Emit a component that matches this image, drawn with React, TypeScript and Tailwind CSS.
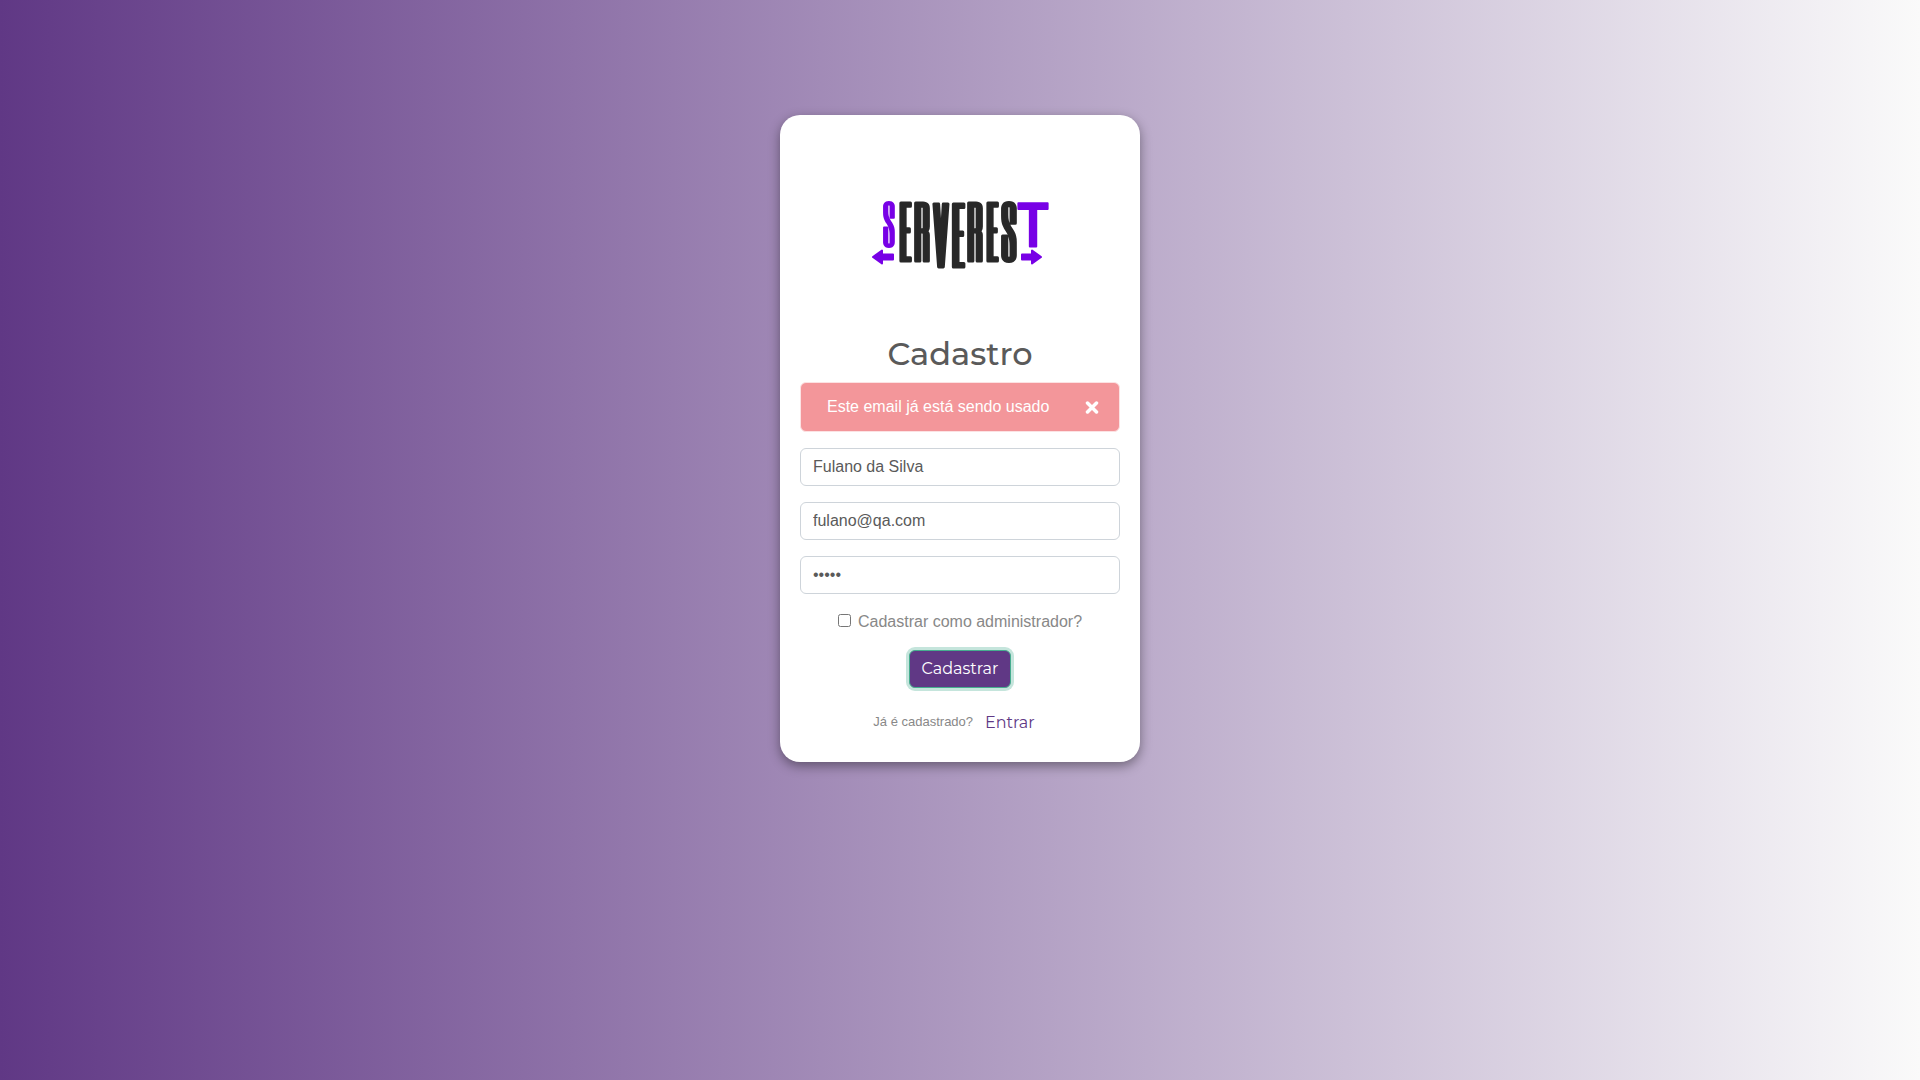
import { useState } from "react";

const heading = "font-['Montserrat','Inter',sans-serif]";
const field =
  "h-[38px] w-full rounded-md border border-[#ced4da] bg-white px-3 text-base leading-6 text-[#5a5a5a] outline-none";

const purple = "#7800e6";
const ink = "#282828";

const letters = [
  { char: "S", x: 29, y: 57, size: 52, color: purple, stroke: 2 },
  { char: "E", x: 45, y: 71, size: 68, color: ink, stroke: 3 },
  { char: "R", x: 62, y: 71, size: 68, color: ink, stroke: 3 },
  { char: "V", x: 81, y: 77, size: 75, color: ink, stroke: 3 },
  { char: "E", x: 98, y: 77, size: 75, color: ink, stroke: 3 },
  { char: "R", x: 115, y: 71, size: 68, color: ink, stroke: 3 },
  { char: "E", x: 132, y: 71, size: 68, color: ink, stroke: 3 },
  { char: "S", x: 149, y: 71, size: 68, color: ink, stroke: 3 },
];

function Logo() {
  return (
    <svg
      viewBox="0 0 200 90"
      className="h-[90px] w-[200px] overflow-visible"
      role="img"
      aria-label="ServeRest"
    >
      <g
        fontFamily="'Six Caps', 'Roboto', sans-serif"
        textAnchor="middle"
        strokeLinejoin="round"
      >
        {letters.map((l, i) => (
          <text
            key={i}
            x={l.x}
            y={l.y}
            fontSize={l.size}
            fill={l.color}
            stroke={l.color}
            strokeWidth={l.stroke}
          >
            {l.char}
          </text>
        ))}
      </g>
      <text
        x="173"
        y="57"
        textAnchor="middle"
        fontFamily="'Archivo Narrow', 'Roboto', sans-serif"
        fontWeight="500"
        fontSize="63"
        fill={purple}
        stroke={purple}
        strokeWidth="2"
        strokeLinejoin="round"
      >
        T
      </text>
      <g fill={purple} stroke={purple} strokeWidth="2" strokeLinejoin="round">
        <path d="M13 67 22 60.500V64.500H33V69.500H22V73.500Z" />
        <path d="M181 67 172 60.500V64.500H162V69.500H172V73.500Z" />
      </g>
    </svg>
  );
}

export default function App() {
  const [showAlert, setShowAlert] = useState(true);
  return (
    <main className="min-h-screen bg-linear-to-r/srgb from-[#603885] to-[#fafafa] px-4 pt-[115px] pb-8 font-['Liberation_Sans',Arial,sans-serif] text-base text-[#888888]">
      <form
        className="mx-auto flex w-full max-w-[360px] flex-col items-center rounded-[20px] bg-white p-5 shadow-[0_4px_12px_rgba(0,0,0,0.4)]"
        onSubmit={(e) => e.preventDefault()}
      >
        <div className="flex h-[200px] items-center justify-center">
          <Logo />
        </div>
        <h1 className={`mb-[9px] text-[32px] leading-[38px] font-medium text-[#5a5a5a] ${heading}`}>
          Cadastro
        </h1>
        {showAlert && (
          <div
            role="alert"
            className="mb-4 flex w-full items-center justify-between rounded-md border border-[#fce2e3] bg-[#f3969a] py-3 pr-5 pl-[26px] leading-6 text-white"
          >
            <span>Este email já está sendo usado</span>
            <button type="button" aria-label="Fechar" onClick={() => setShowAlert(false)}>
              <svg
                viewBox="0 0 14 14"
                className="size-[14px]"
                stroke="white"
                strokeWidth="3.500"
                strokeLinecap="round"
              >
                <path d="M2.500 3 11.500 12M11.500 3 2.500 12" />
              </svg>
            </button>
          </div>
        )}
        <div className="mb-4 flex w-full flex-col gap-4">
          <input className={field} type="text" aria-label="Nome" defaultValue="Fulano da Silva" />
          <input className={field} type="email" aria-label="Email" defaultValue="fulano@qa.com" />
          <input className={field} type="password" aria-label="Senha" defaultValue="teste" />
        </div>
        <label className="mb-4 flex items-start gap-[7px] leading-6">
          <input type="checkbox" className="mt-1 size-[13px]" />
          Cadastrar como administrador?
        </label>
        <button
          type="submit"
          className={`mb-4 h-[38px] rounded-md border border-[#46ad8f] bg-[#603885] px-3 leading-6 text-white shadow-[0_0_0_3px_#c5e5dc] ${heading}`}
        >
          Cadastrar
        </button>
        <div className="flex h-[38px] items-center gap-3">
          <span className="pb-0.5 text-[13px] leading-5">Já é cadastrado?</span>
          <a href="#entrar" className={`pr-3 text-[#603885] ${heading}`}>
            Entrar
          </a>
        </div>
      </form>
    </main>
  );
}
